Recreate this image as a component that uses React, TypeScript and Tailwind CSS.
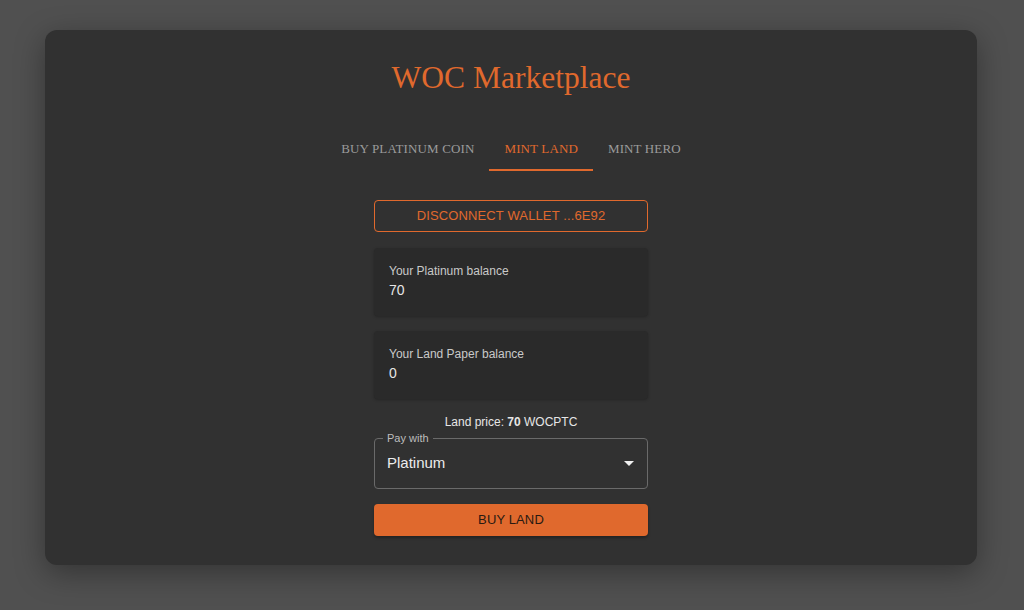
import { useState } from 'react';

const ORANGE = 'text-[#e0692d]';

const tabs = ['Buy Platinum Coin', 'Mint Land', 'Mint Hero'];

function BalanceCard({ label, value }: { label: string; value: string }) {
  return (
    <div className="h-[68px] rounded bg-[#2a2a2a] px-[15px] pt-[15px] shadow-[0_1px_3px_rgba(0,0,0,0.25)]">
      <div className="text-[12px] leading-[16px] text-[#c9c9c9]">{label}</div>
      <div className="mt-[1px] text-[14px] leading-[20px] text-[#e6e6e6]">{value}</div>
    </div>
  );
}

export default function App() {
  const [active, setActive] = useState(1);

  return (
    <div className="min-h-screen bg-[#505050] pl-[45px] pt-[30px] font-['Liberation_Sans',Arial,sans-serif]">
      <div className="h-[535px] w-[932px] rounded-xl bg-[#313131] pt-[29px] shadow-[0_8px_30px_rgba(0,0,0,0.35)]">
        <h1 className={`text-center font-['Liberation_Serif','Times_New_Roman',serif] text-[31.5px] leading-[38px] ${ORANGE}`}>
          WOC Marketplace
        </h1>

        <div className="mt-[26px] flex justify-center">
          {tabs.map((t, i) => (
            <button
              key={t}
              onClick={() => setActive(i)}
              className={`relative h-[48px] px-[15px] pt-[3px] font-['Liberation_Serif','Times_New_Roman',serif] text-[13px] uppercase tracking-[0.01em] ${
                i === active ? ORANGE : 'text-[#9b9b9b]'
              }`}
            >
              {t}
              {i === active && <span className="absolute inset-x-0 bottom-0 h-[2px] bg-[#e0692d]" />}
            </button>
          ))}
        </div>

        <div className="mx-auto mt-[29px] flex w-[274px] flex-col">
          <button className="h-[32px] rounded border border-[#e0692d] text-[13px] uppercase tracking-[0.01em] text-[#e0692d]">
            Disconnect Wallet ...6E92
          </button>

          <div className="mt-[16px] flex flex-col gap-[15px]">
            <BalanceCard label="Your Platinum balance" value="70" />
            <BalanceCard label="Your Land Paper balance" value="0" />
          </div>

          <p className="mt-[14px] text-center text-[12px] leading-[18px] text-[#e6e6e6]">
            Land price: <span className="font-bold">70</span> WOCPTC
          </p>

          <div className="relative mt-[7px] flex h-[51px] items-center rounded border border-[#6a6a6a] px-[12px]">
            <span className="absolute -top-[8px] left-[8px] bg-[#313131] px-[4px] text-[11px] leading-[14px] text-[#bdbdbd]">
              Pay with
            </span>
            <span className="flex-1 text-[15px] text-[#ececec]">Platinum</span>
            <svg width="10" height="6" viewBox="0 0 10 6" className="mr-[1px]">
              <path d="M0 0h10L5 5z" fill="#f0f0f0" />
            </svg>
          </div>

          <button className="mt-[15px] h-[32px] rounded bg-[#e0692d] text-[13px] uppercase tracking-[0.01em] text-[#2a1a12] shadow-[0_2px_3px_rgba(0,0,0,0.3)]">
            Buy Land
          </button>
        </div>
      </div>
    </div>
  );
}
